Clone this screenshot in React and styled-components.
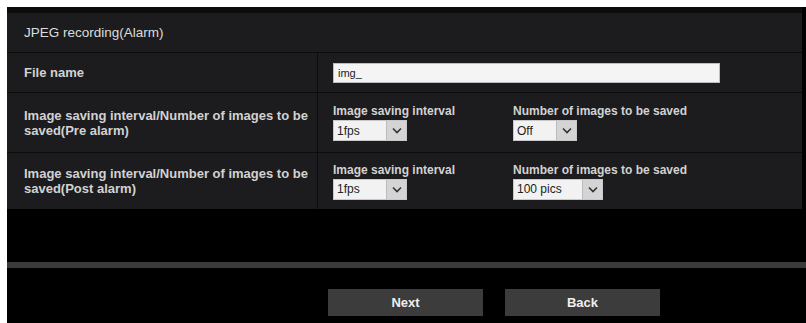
import React from 'react';
import styled, { createGlobalStyle } from 'styled-components';

const Global = createGlobalStyle`
  html, body {
    margin: 0;
    padding: 0;
    background: #fff;
  }
  body {
    font-family: "Liberation Sans", Arial, sans-serif;
  }
`;

const Page = styled.div`
  padding: 7px 0 0 7px;
  width: 806px;
  height: 323px;
  box-sizing: border-box;
  overflow: hidden;
`;

const Panel = styled.div`
  background: #000;
  height: 316px;
  display: flex;
  flex-direction: column;
`;

const Table = styled.div`
  display: grid;
  grid-template-columns: 310px 1fr;
  width: 795px;
  background: #0c0c0d;
  padding-top: 6px;
  row-gap: 1px;
  column-gap: 1px;
`;

const Title = styled.div`
  grid-column: 1 / 3;
  background: #1c1c1e;
  height: 39px;
  display: flex;
  align-items: center;
  padding-left: 17px;
  color: #dcdcdc;
  font-size: 13.5px;
`;

const Label = styled.div`
  background: #1c1c1e;
  height: ${(p) => p.h}px;
  display: flex;
  align-items: center;
  padding-left: 17px;
  color: #d2d2d2;
  font-size: 13px;
  font-weight: bold;
  line-height: 15px;
`;

const Cell = styled.div`
  background: #1c1c1e;
  height: ${(p) => p.h}px;
  display: flex;
  align-items: center;
  padding-left: 15px;
`;

const TextInput = styled.div`
  width: 387px;
  height: 20px;
  background: #f4f4f4;
  border: 1px solid #bdbdbd;
  box-sizing: border-box;
  color: #222;
  font-size: 11px;
  padding-left: 4px;
  display: flex;
  align-items: center;
`;

const Field = styled.div`
  width: ${(p) => p.w}px;
  display: flex;
  flex-direction: column;
  gap: 2px;
  color: #d2d2d2;
  font-size: 12px;
  font-weight: bold;
`;

const Select = styled.div`
  display: flex;
  width: ${(p) => p.w}px;
  height: 21px;
  background: #f2f2f2;
  border: 1px solid #c8c8c8;
  box-sizing: border-box;
`;

const SelectValue = styled.span`
  flex: 1;
  color: #222;
  font-size: 12px;
  font-weight: normal;
  padding-left: 3px;
  display: flex;
  align-items: center;
`;

const Arrow = styled.span`
  width: 19px;
  background: #d4d4d4;
  border-left: 1px solid #bbb;
  display: flex;
  align-items: center;
  justify-content: center;
`;

const Spacer = styled.div`
  height: 53px;
`;

const Divider = styled.div`
  height: 6px;
  background: #3a3a3a;
`;

const ButtonBar = styled.div`
  display: flex;
  gap: 22px;
  padding: 21px 0 0 321px;
`;

const Button = styled.button`
  width: 155px;
  height: 27px;
  background: #3c3c3c;
  border: none;
  color: #efefef;
  font-family: "Liberation Sans", Arial, sans-serif;
  font-size: 13px;
  font-weight: bold;
`;

const Chevron = () => (
  <svg width="10" height="7" viewBox="0 0 10 7">
    <path d="M1 1.5 L5 5.5 L9 1.5" fill="none" stroke="#333" strokeWidth="1.6" />
  </svg>
);

const Dropdown = ({ w, value }) => (
  <Select w={w}>
    <SelectValue>{value}</SelectValue>
    <Arrow>
      <Chevron />
    </Arrow>
  </Select>
);

const Pair = ({ first, second }) => (
  <>
    <Field w={180}>
      Image saving interval
      <Dropdown w={74} value={first} />
    </Field>
    <Field w={200}>
      Number of images to be saved
      <Dropdown w={second.w} value={second.v} />
    </Field>
  </>
);

const App = () => (
  <Page>
    <Global />
    <Panel>
      <Table>
        <Title>JPEG recording(Alarm)</Title>
        <Label h={39}>File name</Label>
        <Cell h={39}>
          <TextInput>img_</TextInput>
        </Cell>
        <Label h={59}>
          Image saving interval/Number of images to be
          <br />
          saved(Pre alarm)
        </Label>
        <Cell h={59}>
          <Pair first="1fps" second={{ w: 64, v: 'Off' }} />
        </Cell>
        <Label h={56}>
          Image saving interval/Number of images to be
          <br />
          saved(Post alarm)
        </Label>
        <Cell h={56}>
          <Pair first="1fps" second={{ w: 90, v: '100 pics' }} />
        </Cell>
      </Table>
      <Spacer />
      <Divider />
      <ButtonBar>
        <Button>Next</Button>
        <Button>Back</Button>
      </ButtonBar>
    </Panel>
  </Page>
);

export default App;
